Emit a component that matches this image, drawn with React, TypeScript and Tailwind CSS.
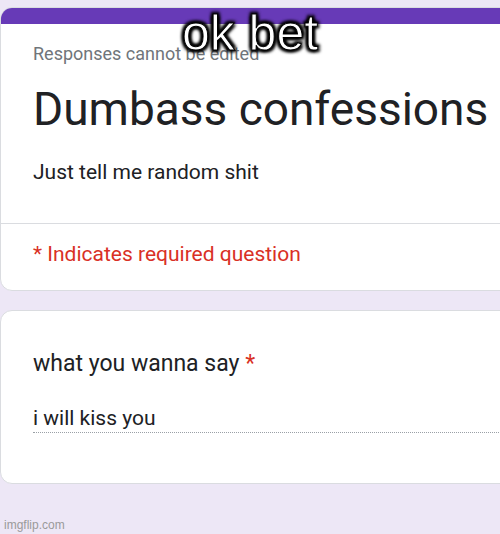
import React from "react";

const App: React.FC = () => {
    return (
        <div className="relative w-[500px] h-[534px] overflow-hidden bg-[#ede7f6] pt-[7px] font-['Roboto',sans-serif]">
            {/* Header card */}
            <div className="w-[530px] rounded-[12px] bg-white border border-[#dadce0] overflow-hidden">
                <div className="h-[16px] bg-[#673ab7]" />
                <div className="pl-[32px]">
                    <p className="mt-[19px] text-[18px] leading-[22px] text-[#70757a]">Responses cannot be edited</p>
                    <h1 className="mt-[18px] text-[46px] leading-[52px] text-[#202124]">Dumbass confessions</h1>
                    <p className="mt-[24px] text-[21px] leading-[26px] text-[#202124]">Just tell me random shit</p>
                </div>
                <div className="mt-[38px] border-t border-[#dadce0]" />
                <p className="pl-[32px] pt-[17px] pb-[23px] text-[21px] leading-[26px] text-[#d93025]">
                    * Indicates required question
                </p>
            </div>

            {/* Question card */}
            <div className="mt-[19px] w-[530px] h-[174px] rounded-[12px] bg-white border border-[#dadce0] pl-[32px]">
                <p className="mt-[39px] text-[23px] leading-[28px] text-[#202124]">
                    what you wanna say <span className="text-[#d93025]">*</span>
                </p>
                <div className="mt-[27px] border-b border-dotted border-[#9aa0a6] pb-[1px]">
                    <p className="text-[21px] leading-[26px] text-[#202124]">i will kiss you</p>
                </div>
            </div>

            {/* Watermark */}
            <p className="absolute left-[4px] bottom-[2px] text-[12px] leading-[14px] text-[#9a9a9a] font-['Liberation_Sans',sans-serif]">
                imgflip.com
            </p>

            {/* Caption */}
            <div className="absolute top-[4px] left-0 w-full text-center text-[50px] leading-[58px] text-white font-['Liberation_Sans',Arial,sans-serif] [-webkit-text-stroke:1px_#000] [text-shadow:2px_2px_3px_#000,-2px_-2px_3px_#000,2px_-2px_3px_#000,-2px_2px_3px_#000,0_0_5px_#000]">
                ok bet
            </div>
        </div>
    );
};

export default App;
